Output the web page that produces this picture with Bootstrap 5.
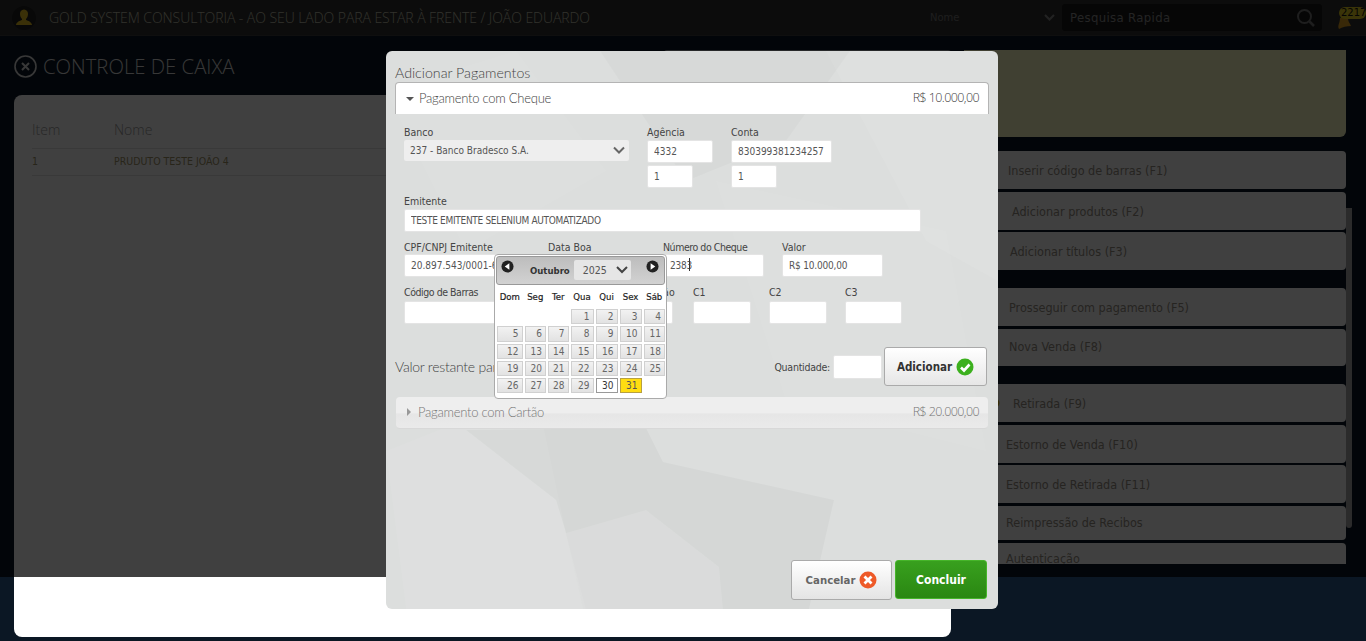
<!DOCTYPE html>
<html lang="pt-BR">
<head>
<meta charset="utf-8">
<title>Controle de Caixa</title>
<link href="https://cdn.jsdelivr.net/npm/bootstrap@5.3.0/dist/css/bootstrap.min.css" rel="stylesheet">
<style>
html,body{height:641px;overflow:hidden}
body{background:#0b1724;font-family:"Open Sans","Liberation Sans",sans-serif;position:relative}
.top-bar{height:36px;background:#333;border-bottom:1px solid #3c3c3c;padding:0 0 0 12px;align-items:center;flex-wrap:nowrap;overflow:hidden}
.avatar{width:24px;height:24px;margin-right:13px;flex:none}
.top-title{font-size:14px;font-weight:300;color:#c4c4b0;letter-spacing:-.06px;white-space:nowrap;flex:none;width:541px}
.top-filter{margin-left:340px;width:132px;font:10px "DejaVu Sans",sans-serif;color:#777;flex:none;justify-content:space-between;align-items:center;padding-right:7px}
.top-search{width:260px;height:27px;background:#1a1a1a;color:#909090;font:13px "DejaVu Sans Condensed","DejaVu Sans",sans-serif;letter-spacing:.35px;flex:none;align-items:center;justify-content:space-between;padding:0 6px 0 8px;border-radius:3px}
.bell-box{width:44px;position:relative;height:30px;flex:none}
.bell-badge{position:absolute;left:17px;top:4px;font:10px/11px "DejaVu Sans",sans-serif;color:#111;background:#e8d020;border-radius:6px;width:27px;height:12px;overflow:hidden;white-space:nowrap;padding-left:2px}
.bell-shape{position:absolute;left:15px;top:15px}
.work{padding:14px 20px 0 14px;gap:13px;flex-wrap:nowrap}
.left-col{width:937px;flex:none}
.title-row{height:45px;justify-content:space-between;align-items:flex-start}
.page-title{font-size:20.300px;font-weight:300;color:#ddd;margin:0;display:flex;align-items:center;gap:6px;line-height:33px}
.ghost-tools{width:287px;height:30px;background:#fff;opacity:.6;border-radius:3px}
.main-card{height:542px;background:#fff;border-radius:8px;padding:20px 18px;border:0}
.data-head{font-size:14px;font-weight:300;color:#999;height:34px;padding-bottom:4px;border-bottom:1px solid #e4e4e4;align-items:center}
.data-row{font:10.500px "DejaVu Sans Condensed","DejaVu Sans",sans-serif;color:#a09468;height:27px;padding-bottom:2px;border-bottom:1px solid #e4e4e4;align-items:center}
.cell-item{width:82px}
.right-col{width:382px;flex:none}
.note-box{height:87px;background:#ffffc8;border-radius:0 0 6px 6px;margin-bottom:14px}
.menu-scroll{height:413px;overflow:hidden}
.menu-row{height:38px;background:#fff;border-radius:4px;color:#968f84;font:12.500px "DejaVu Sans Condensed","DejaVu Sans",sans-serif;display:flex;align-items:center;margin-bottom:3px;white-space:nowrap}
.menu-gap{margin-bottom:18px}
.tight-next{margin-bottom:2px}
.m4{padding-left:44px}.m8{padding-left:48px}.m6{padding-left:46px}.m5{padding-left:45px}.m2{padding-left:42px}
.row-short{height:34px;padding-bottom:2px}
.row-last{height:38px;padding-bottom:8px}
.row-nova{height:37px;padding-bottom:2px}
.retirada-row{padding-left:26px}
.retirada-icon{margin-right:13px;flex:none}
.bar-track{position:absolute;left:1346px;top:208px;width:6px;height:320px;background:#aaa;border-radius:0 0 3px 3px;z-index:1}
.dim-layer{position:absolute;left:0;top:0;width:100%;height:577px;background:rgba(0,0,0,.75);z-index:5}
.pay-modal{position:absolute;left:386px;top:51px;width:612px;height:558px;background:#dcdedd;border-radius:6px;z-index:10;padding:12px 9px 0;overflow:hidden}
.modal-art{position:absolute;left:0;top:0;width:612px;height:558px}
.modal-body-flow{position:relative}
.modal-head{font-family:Lato,"Open Sans",sans-serif;font-size:14.200px;font-weight:300;color:#444;line-height:19px}
.acc-open{height:32px;background:#fff;border:1px solid #b4b4b4;border-bottom:0;border-radius:4px 4px 0 0;font-family:Lato,"Open Sans",sans-serif;font-size:13px;letter-spacing:-.25px;font-weight:300;color:#444;display:flex;justify-content:space-between;align-items:center;padding:0 9px 0 10px}
.amt{font-family:"Open Sans",sans-serif;font-size:12.500px;letter-spacing:-.6px;font-weight:300}
.tri-down{display:inline-block;border:4px solid transparent;border-top:4px solid #555;border-bottom:0;margin-right:5px;vertical-align:2px}
.tri-right{display:inline-block;border:4px solid transparent;border-left:4px solid #999;border-right:0;margin-right:7px;vertical-align:1px;margin-left:1px}
.pay-form{padding:11px 0 0 9px}
.lbl{font:10.500px/14px "DejaVu Sans Condensed","DejaVu Sans",sans-serif;color:#444;display:block;height:14px;margin:0;white-space:nowrap}
.lbl-tight{letter-spacing:-.45px}
.lbl-wide{letter-spacing:.3px}
.pay-form .form-control,.qty-line .form-control{font:10px "DejaVu Sans Condensed","DejaVu Sans",sans-serif;color:#555;height:23px;min-height:0;padding:0 6px;border:1px solid #e4e4e4;border-radius:2px;background:#fff;box-shadow:none}
.pay-form .input-caps{letter-spacing:-.3px}
.pay-form .input-money{letter-spacing:-.2px}
.pay-form .form-select{font:10px "DejaVu Sans Condensed","DejaVu Sans",sans-serif;color:#555;height:21px;min-height:0;padding:0 6px;border:0;border-radius:2px;background-color:#eee;box-shadow:none;width:225px;background-image:url("data:image/svg+xml,%3csvg xmlns='http://www.w3.org/2000/svg' viewBox='0 0 12 9'%3e%3cpath fill='none' stroke='%23666' stroke-width='2' d='M1 1.500l5 5 5-5'/%3e%3c/svg%3e");background-size:12px 9px;background-position:right 4px center;line-height:19px}
.form-line{display:flex;flex-wrap:nowrap}
.form-line .form-control{flex:none}
.w46{width:46px}.w66{width:66px}.w101{width:101px}.w58{width:58px}.w57{width:57px}
.gap-top-1{margin-top:1px}.gap-top-2{margin-top:2px}
.qty-line{display:flex;justify-content:space-between;align-items:center;height:39px;margin-top:22px;padding-right:2px}
.rest-text{font-family:Lato,"Open Sans",sans-serif;font-size:14px;letter-spacing:-.25px;font-weight:300;color:#444;white-space:nowrap}
.qty-label{font:10.500px "DejaVu Sans Condensed","DejaVu Sans",sans-serif;letter-spacing:-.25px;color:#444;margin-right:3px}
.qty-line .form-control{width:49px;height:24px;margin-right:2px}
.btn-add{width:103px;height:39px;padding:0;background:linear-gradient(#fff,#e6e6e6);border:1px solid #aaa;border-radius:3px;font:bold 11.500px "DejaVu Sans Condensed","DejaVu Sans",sans-serif;color:#333;display:flex;align-items:center;justify-content:center;gap:4px}
.acc-closed{height:32px;margin:11px 1px 0;background:linear-gradient(#eeeeee 50%,#e6e6e6 55%,#eaeaea);border-radius:4px;border-bottom:1px solid #d8d8d8;font-family:Lato,"Open Sans",sans-serif;font-size:13px;letter-spacing:-.25px;font-weight:300;color:#777;display:flex;justify-content:space-between;align-items:center;padding:0 9px 0 10px}
.foot-btns{position:absolute;right:11px;bottom:9px;display:flex;gap:3px}
.btn-cancel{width:101px;height:40px;padding:0;background:linear-gradient(#fff,#e4e4e4);border:1px solid #aaa;border-radius:3px;font:bold 11.300px "DejaVu Sans Condensed","DejaVu Sans",sans-serif;color:#666;display:flex;align-items:center;justify-content:center;gap:4px}
.btn-finish{width:92px;height:39px;padding:0;background:linear-gradient(#38a01e,#2a8712);border:1px solid #46b52a;border-radius:3px;font:bold 12px "DejaVu Sans Condensed","DejaVu Sans",sans-serif;color:#fff}
.date-pop{position:absolute;left:108px;top:203px;width:173px;height:145px;background:#fff;border:1px solid #aaa;border-radius:4px;padding:1px;z-index:3;font-family:"DejaVu Sans Condensed","DejaVu Sans",sans-serif}
.date-head{height:29px;background:linear-gradient(#bdbdbd,#d2d2d2);border:1px solid #999;border-radius:3px;display:flex;align-items:flex-start;padding:3px 5px 0 4px;font:bold 9.500px "DejaVu Sans Condensed","DejaVu Sans",sans-serif;color:#333}
.date-month{margin-left:16px;margin-right:4px;margin-top:5px}
.date-year{width:57px;height:20px;background:#e6e6e6;border-radius:2px;font:10.500px "DejaVu Sans Condensed","DejaVu Sans",sans-serif;color:#555;display:flex;align-items:center;justify-content:space-between;padding:0 3px 0 9px}
.date-grid{display:grid;grid-template-columns:25.500px 21.500px 20.500px 23px 22px 22px 21.500px;gap:2px;padding-left:1px;margin-top:5px}
.dow{font:9.500px "DejaVu Sans Condensed","DejaVu Sans",sans-serif;-webkit-text-stroke:.2px #222;color:#222;text-align:center;height:16px;line-height:14px;margin-bottom:1px}
.dayc{height:15.300px;border:1px solid #d0d0d0;background:linear-gradient(#f2f2f2,#e2e2e2);font:10px/14px "DejaVu Sans Condensed","DejaVu Sans",sans-serif;color:#666;text-align:right;padding-right:3px}
.day-now{background:#fff;border-color:#999;color:#333}
.day-sel{background:#fd1;border-color:#b8a040;color:#555}
</style>
</head>
<body>
<nav class="navbar top-bar d-flex">
  <svg class="avatar" viewBox="0 0 24 24"><circle cx="12" cy="12" r="12" fill="#222"/><path d="M12 3.500c2.800 0 4 2.200 4 4.500 0 2.200-1 4-2 5v1c2 1 5.500 1.500 6 5H4c.5-3.500 4-4 6-5v-1c-1-1-2-2.800-2-5 0-2.300 1.200-4.500 4-4.500z" fill="#e8c020"/></svg>
  <span class="top-title">GOLD SYSTEM CONSULTORIA - AO SEU LADO PARA ESTAR À FRENTE / JOÃO EDUARDO</span>
  <div class="top-filter d-flex"><span>Nome</span><svg width="11" height="7" viewBox="0 0 11 7"><path d="M1 1l4.500 4.500L10 1" fill="none" stroke="#888" stroke-width="2"/></svg></div>
  <div class="top-search d-flex"><span>Pesquisa Rapida</span><svg width="20" height="20" viewBox="0 0 20 20"><circle cx="8.500" cy="8.500" r="6.500" fill="none" stroke="#777" stroke-width="2"/><path d="M13.500 13.500L18 18" stroke="#777" stroke-width="2.500"/></svg></div>
  <div class="bell-box">
    <svg class="bell-shape" width="15" height="11" viewBox="0 0 15 11"><path d="M3 0h8c0 4 2 5 3 8-4 0-9 1-12 3C0 8 3 5 3 0z" fill="#e0a020"/></svg>
    <span class="bell-badge">2217</span>
  </div>
</nav>

<div class="work d-flex">
  <section class="left-col">
    <div class="title-row d-flex">
      <h1 class="page-title"><svg width="23" height="23" viewBox="0 0 23 23"><circle cx="11.500" cy="11.500" r="10.500" fill="none" stroke="#ddd" stroke-width="1.600"/><path d="M8 8l7 7M15 8l-7 7" stroke="#ddd" stroke-width="2"/></svg>CONTROLE DE CAIXA</h1>
      <div class="ghost-tools"></div>
    </div>
    <div class="card main-card">
      <div class="data-head d-flex"><span class="cell-item">Item</span><span>Nome</span></div>
      <div class="data-row d-flex"><span class="cell-item">1</span><span>PRUDUTO TESTE JOÃO 4</span></div>
    </div>
  </section>
  <aside class="right-col">
    <div class="note-box"></div>
    <div class="menu-scroll">
      <div class="menu-row m4">Inserir código de barras (F1)</div>
      <div class="menu-row m8 tight-next">Adicionar produtos (F2)</div>
      <div class="menu-row m6 menu-gap">Adicionar títulos (F3)</div>
      <div class="menu-row m5">Prosseguir com pagamento (F5)</div>
      <div class="menu-row m5 menu-gap row-nova">Nova Venda (F8)</div>
      <div class="menu-row retirada-row"><svg class="retirada-icon" width="10" height="10" viewBox="0 0 10 10"><circle cx="5" cy="5" r="4.500" fill="#d8b020"/></svg>Retirada (F9)</div>
      <div class="menu-row m2 tight-next">Estorno de Venda (F10)</div>
      <div class="menu-row m2">Estorno de Retirada (F11)</div>
      <div class="menu-row m2 row-short">Reimpressão de Recibos</div>
      <div class="menu-row m2 row-last">Autenticação</div>
    </div>
  </aside>
</div>
<div class="bar-track"></div>
<div class="dim-layer"></div>

<div class="pay-modal">
  <svg class="modal-art" viewBox="0 0 612 558" aria-hidden="true">
    <polygon points="80,379 260,377 277,411 448,449 423,558 197,558 180,482 170,449" fill="#000" opacity=".028"/>
    <polygon points="180,482 260,459 333,516 337,558 197,558" fill="#fff" opacity=".12"/>
    <polygon points="0,400 150,340 180,482 200,558 20,558" fill="#fff" opacity=".06"/>
    <polygon points="214,0 464,0 400,90 300,130" fill="#000" opacity=".018"/>
    <polygon points="440,0 612,0 612,230 540,190" fill="#fff" opacity=".07"/>
    <polygon points="0,40 130,0 220,120 80,200" fill="#fff" opacity=".05"/>
    <polygon points="330,130 560,180 600,400 400,350" fill="#fff" opacity=".05"/>
  </svg>
  <div class="modal-body-flow">
    <div class="modal-head">Adicionar Pagamentos</div>
    <div class="acc-open"><span><i class="tri-down"></i>Pagamento com Cheque</span><span class="amt">R$ 10.000,00</span></div>
    <form class="pay-form">
      <div class="form-line" style="height:69px">
        <div style="width:243px"><label class="lbl">Banco</label><select class="form-select gap-top-1"><option>237 - Banco Bradesco S.A.</option></select></div>
        <div style="width:84px"><label class="lbl">Agência</label><input class="form-control w66 gap-top-1" value="4332"><input class="form-control w46 gap-top-2" value="1"></div>
        <div style="width:101px"><label class="lbl">Conta</label><input class="form-control w101 gap-top-1" value="830399381234257"><input class="form-control w46 gap-top-2" value="1"></div>
      </div>
      <div style="height:46px"><label class="lbl">Emitente</label><input class="form-control input-caps gap-top-1" style="width:517px" value="TESTE EMITENTE SELENIUM AUTOMATIZADO"></div>
      <div class="form-line position-relative" style="height:45px">
        <div style="width:144px"><label class="lbl">CPF/CNPJ Emitente</label><input class="form-control" style="width:130px" value="20.897.543/0001-65"></div>
        <div style="width:115px"><label class="lbl">Data Boa</label><input class="form-control" style="width:100px"></div>
        <div style="width:119px"><label class="lbl lbl-tight">Número do Cheque</label><input class="form-control w101 input-money" value="2383"></div>
        <div><label class="lbl">Valor</label><input class="form-control w101 input-money" value="R$ 10.000,00"></div>
        <span class="position-absolute" style="left:285px;top:18px;width:1px;height:13px;background:#333"></span>
      </div>
      <div class="form-line" style="height:40px">
        <div style="width:201px"><label class="lbl lbl-tight">Código de Barras</label><input class="form-control gap-top-2" style="width:190px" value=""></div>
        <div style="width:88px"><label class="lbl lbl-wide">Compensação</label><input class="form-control gap-top-2" style="width:68px"></div>
        <div style="width:76px"><label class="lbl">C1</label><input class="form-control w58 gap-top-2"></div>
        <div style="width:76px"><label class="lbl">C2</label><input class="form-control w58 gap-top-2"></div>
        <div><label class="lbl">C3</label><input class="form-control w57 gap-top-2"></div>
      </div>
    </form>
    <div class="qty-line">
      <span class="rest-text">Valor restante para pagamento</span>
      <div class="d-flex align-items-center">
        <span class="qty-label">Quantidade:</span><input class="form-control">
        <button type="button" class="btn btn-add">Adicionar <svg width="18" height="18" viewBox="0 0 18 18"><circle cx="9" cy="9" r="8.500" fill="#3cb01e"/><path d="M5 9.500l3 3 5.500-6" fill="none" stroke="#fff" stroke-width="2.600"/></svg></button>
      </div>
    </div>
    <div class="acc-closed"><span><i class="tri-right"></i>Pagamento com Cartão</span><span class="amt">R$ 20.000,00</span></div>
  </div>

  <div class="date-pop">
    <div class="date-head">
      <svg width="13" height="13" viewBox="0 0 14 14"><circle cx="7" cy="7" r="6.500" fill="#222"/><path d="M4 7l5-3.500v7z" fill="#fff"/></svg>
      <span class="date-month">Outubro</span>
      <span class="date-year">2025<svg width="12" height="8" viewBox="0 0 12 8"><path d="M1 1l5 5 5-5" fill="none" stroke="#444" stroke-width="2"/></svg></span>
      <svg class="ms-auto" width="13" height="13" viewBox="0 0 14 14"><circle cx="7" cy="7" r="6.500" fill="#222"/><path d="M10 7L5 3.500v7z" fill="#fff"/></svg>
    </div>
    <div class="date-grid">
      <span class="dow">Dom</span><span class="dow">Seg</span><span class="dow">Ter</span><span class="dow">Qua</span><span class="dow">Qui</span><span class="dow">Sex</span><span class="dow">Sáb</span>
      <span></span><span></span><span></span>
      <span class="dayc">1</span><span class="dayc">2</span><span class="dayc">3</span><span class="dayc">4</span>
      <span class="dayc">5</span><span class="dayc">6</span><span class="dayc">7</span><span class="dayc">8</span><span class="dayc">9</span><span class="dayc">10</span><span class="dayc">11</span>
      <span class="dayc">12</span><span class="dayc">13</span><span class="dayc">14</span><span class="dayc">15</span><span class="dayc">16</span><span class="dayc">17</span><span class="dayc">18</span>
      <span class="dayc">19</span><span class="dayc">20</span><span class="dayc">21</span><span class="dayc">22</span><span class="dayc">23</span><span class="dayc">24</span><span class="dayc">25</span>
      <span class="dayc">26</span><span class="dayc">27</span><span class="dayc">28</span><span class="dayc">29</span><span class="dayc day-now">30</span><span class="dayc day-sel">31</span>
    </div>
  </div>

  <div class="foot-btns">
    <button type="button" class="btn btn-cancel">Cancelar <svg width="18" height="18" viewBox="0 0 18 18"><circle cx="9" cy="9" r="8.500" fill="#ee5a28"/><path d="M5.500 5.500l7 7M12.500 5.500l-7 7" stroke="#fff" stroke-width="2.800"/></svg></button>
    <button type="button" class="btn btn-finish">Concluir</button>
  </div>
</div>
<script src="https://cdn.jsdelivr.net/npm/bootstrap@5.3.0/dist/js/bootstrap.bundle.min.js"></script>
</body>
</html>
